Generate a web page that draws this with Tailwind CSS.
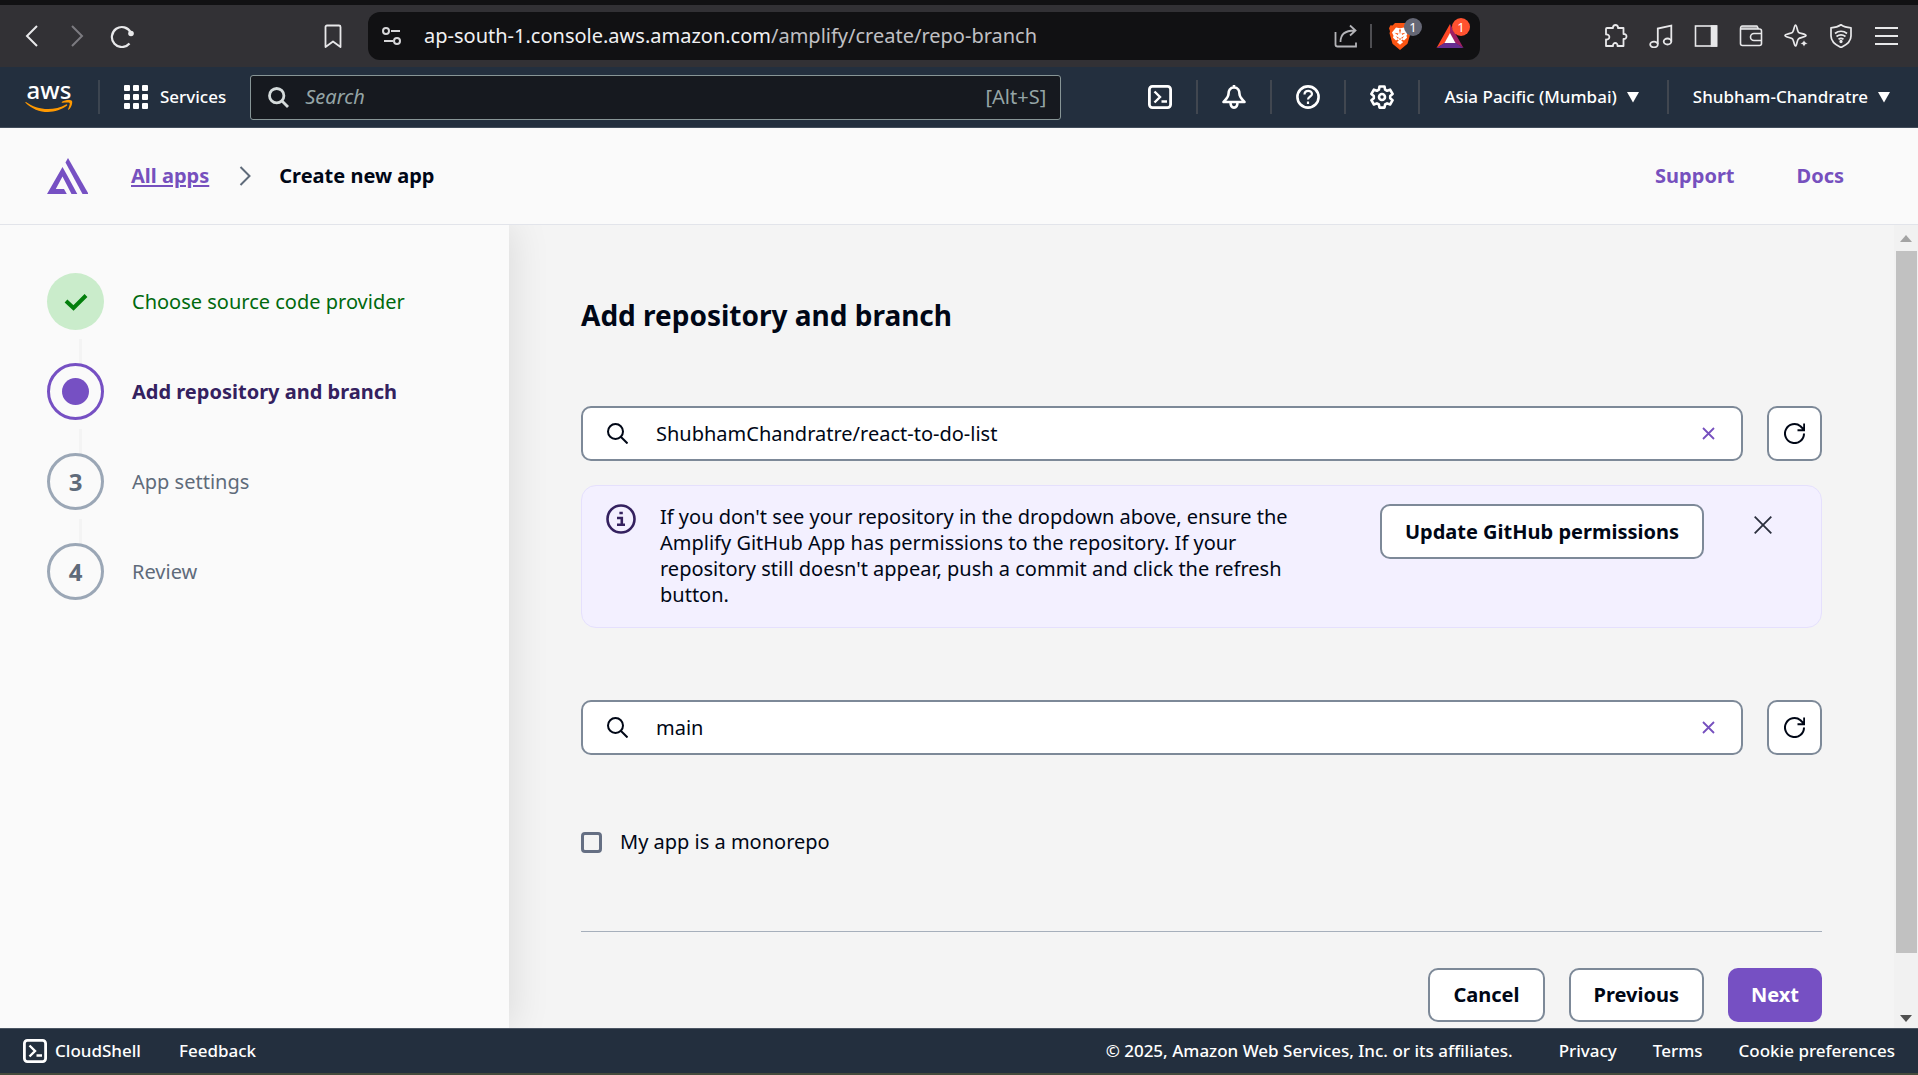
<!DOCTYPE html>
<html lang="en">
<head>
<meta charset="utf-8">
<meta name="viewport" content="width=device-width, initial-scale=1">
<title>AWS Amplify - Create new app</title>
<script src="https://cdn.jsdelivr.net/npm/@tailwindcss/browser@4"></script>
</head>
<body class="flex h-screen flex-col overflow-hidden bg-[#fafafa] font-['Noto_Sans',sans-serif] text-[20px] leading-[26px] text-[#000716]">

<!-- Browser toolbar -->
<div class="flex h-[67px] shrink-0 items-center border-t-5 border-[#111113] bg-[#323135] pr-5 text-[#e8e8ea]">
  <div class="flex w-[368px] shrink-0 items-center gap-[21px] pr-[23px] pl-5">
    <button type="button" aria-label="Back"><svg class="size-6" viewBox="0 0 24 24" fill="none" stroke="currentColor" stroke-width="2"><path d="M17 2 7 12l10 10"/></svg></button>
    <button type="button" aria-label="Forward" class="text-[#7c7b80]"><svg class="size-6" viewBox="0 0 24 24" fill="none" stroke="currentColor" stroke-width="2"><path d="m7 2 10 10L7 22"/></svg></button>
    <button type="button" aria-label="Reload"><svg class="size-6" viewBox="0 0 24 24" fill="none" stroke="currentColor" stroke-width="2.200"><path d="M19.500 19.500a10 10 0 1 1 1.300-11"/><circle cx="21" cy="9.500" r="2.800" fill="currentColor" stroke="none"/></svg></button>
    <button type="button" aria-label="Bookmark" class="ml-auto"><svg class="size-6" viewBox="0 0 24 24" fill="none" stroke="currentColor" stroke-width="1.800" stroke-linejoin="round"><path d="M4.500 3a1.500 1.500 0 0 1 1.500-1.500h12A1.500 1.500 0 0 1 19.500 3v20L12 17.500 4.500 23z"/></svg></button>
  </div>
  <div class="mr-31 flex h-12 flex-1 items-center rounded-xl bg-[#111113] pr-4 pl-3">
    <svg class="size-6 shrink-0" viewBox="0 0 24 24" fill="none" stroke="#d6d6d8" stroke-width="2"><circle cx="6" cy="7" r="3"/><path d="M11 7h9M4 17h9"/><circle cx="17" cy="17" r="3"/></svg>
    <p class="ml-5 flex-1 text-[#f0f0f2]">ap-south-1.console.aws.amazon.com<span class="text-[#c0c0c4]">/amplify/create/repo-branch</span></p>
    <button type="button" aria-label="Share"><svg class="size-6" viewBox="0 0 24 24" fill="none" stroke="#b4b4b8" stroke-width="1.800"><path d="M1.500 8v12.500a2 2 0 0 0 2 2h18.500v-4M6.500 18c0-7 4-11.500 14-11.500M16 1.500l5.500 5-5.500 5"/></svg></button>
    <span class="mr-4 ml-3 h-6 w-0.5 bg-[#4e4e52]"></span>
    <button type="button" aria-label="Brave Shields" class="relative w-7"><svg class="h-7 w-6" viewBox="0 0 24 28"><path fill="#fb5412" d="M7 1h10l2.500 2.500 2-.3 1.500 3-1 3 .5 2-3 10.500L12 28l-7.500-6.300L1.500 11.200 2 9.200l-1-3 1.500-3 2 .3z"/><path fill="#fff" d="M8 5.500 12 6.300l4-.8 4 5-1.500 3.300.5 2-3 2.700-1.500-1-1.300 1.200 2 1.300-3.200 2.800-3.200-2.800 2-1.300L9.500 17.500l-1.500 1-3-2.700.5-2L4 10.500z"/><path fill="#fb5412" d="m6.500 10.800 4 .6-.8 1.500zM17.500 10.800l-4 .6.8 1.500zM8 14l3 2-1.500.6zM16 14l-3 2 1.500.6zM11 7.500h2l-1 5zM10.500 16.500h3L12 18z"/></svg><span class="absolute -top-1 left-4 size-[18px] rounded-full bg-[#656775] text-center text-[13px] leading-[18px] text-white">1</span></button>
    <button type="button" aria-label="Brave Rewards" class="relative ml-5 w-7"><svg class="h-7 w-7" viewBox="0 0 28 28"><path fill="#ff4724" d="M14 2 .5 26 9 21l5-9z"/><path fill="#9e1f63" d="m14 2 13.500 24L19 21l-5-9z"/><path fill="#662d91" d="M.5 26h27L19 20.500H9z"/><path fill="#fff" d="m14 11 5.500 10h-11z"/></svg><span class="absolute -top-1 left-4 size-[18px] rounded-full bg-[#ff5230] text-center text-[13px] leading-[18px] text-white">1</span></button>
  </div>
  <div class="flex items-center gap-[21px]">
    <button type="button" aria-label="Extensions"><svg class="size-6" viewBox="0 0 24 24" fill="none" stroke="currentColor" stroke-width="1.800" stroke-linejoin="round"><path d="M3 4h6c-.5-4 5.500-4 5 0h5.500v6c4-.3 4 5.300 0 5v7h-6c.5-4-5-4-4.500 0H2v-6.500c4.500.5 4.500-5.500 0-5V5a1 1 0 0 1 1-1z"/></svg></button>
    <button type="button" aria-label="Playlist"><svg class="size-6" viewBox="0 0 24 24" fill="none" stroke="currentColor" stroke-width="1.800"><ellipse cx="5" cy="20.500" rx="3.800" ry="2.800"/><ellipse cx="18.500" cy="17.500" rx="3.800" ry="3"/><path d="M8.800 20V4.500L22.300 1.500v16"/></svg></button>
    <button type="button" aria-label="Sidebar"><svg class="size-6" viewBox="0 0 24 24" fill="none" stroke="currentColor" stroke-width="1.600"><rect x="1.500" y="2" width="21" height="20"/><path fill="currentColor" d="M17.500 2h5v20h-5z"/></svg></button>
    <button type="button" aria-label="Wallet"><svg class="size-6" viewBox="0 0 24 24" fill="none" stroke="currentColor" stroke-width="1.600" stroke-linejoin="round"><path d="M1.500 5v14.500a2 2 0 0 0 2 2h17a2 2 0 0 0 2-2V7a2 2 0 0 0-2-2zM1.500 5c0-2 .5-3 2-3h14.500l1.500 3M22.500 9.500H15a3.500 3.500 0 0 0 0 7h7.500"/><path fill="currentColor" fill-opacity=".6" stroke="none" d="M3 2h15l1 3H2z"/></svg></button>
    <button type="button" aria-label="Leo AI"><svg class="size-6" viewBox="0 0 24 24" fill="none" stroke="currentColor" stroke-width="1.700" stroke-linejoin="round"><path d="M11.500 1c1.300 0 1.700 6 3 7.300S22 10 22 11.500s-6 2-7.500 3.300-1.700 7.200-3 7.200-1.700-6-3-7.200S1 13 1 11.500s6-2 7.500-3.200S10.200 1 11.500 1z"/><path stroke="#323135" stroke-width="1" fill="currentColor" d="m20 15 1.300 3 3 1.500-3 1.300L20 24l-1.300-3.200-3-1.300 3-1.500z"/></svg></button>
    <button type="button" aria-label="VPN"><svg class="size-6" viewBox="0 0 24 24" fill="none" stroke="currentColor" stroke-width="1.700" stroke-linejoin="round"><path d="M12 .8c3 2.200 6 2.800 10 3V12c0 5-4.500 9-10 11.500C6.500 21 2 17 2 12V3.800c4-.2 7-.8 10-3z"/><path d="M6 9.500c3.500-3 8.500-3 12 0M7.500 12.500c2.700-2 6.300-2 9 0M9.500 15.300c1.500-1 3.500-1 5 0"/><circle cx="12" cy="17.500" r=".8" fill="currentColor"/></svg></button>
    <button type="button" aria-label="Menu"><svg class="size-6" viewBox="0 0 24 24" fill="none" stroke="currentColor" stroke-width="2"><path d="M1 4h23M1 12h23M1 20h23"/></svg></button>
  </div>
</div>

<!-- AWS global navigation -->
<nav class="flex h-[61px] shrink-0 items-center border-b border-[#424d5b] bg-[#232f3e] pr-7 pl-[25px] text-[17px] font-medium text-white">
  <a href="#" aria-label="AWS home" class="shrink-0"><svg class="h-11 w-12" viewBox="0 0 48 44"><text x="24" y="24" text-anchor="middle" font-family="Noto Sans, sans-serif" font-size="24" font-weight="500" fill="#fff">aws</text><g transform="translate(0 6)"><path fill="#ff9900" d="M1 21c6 4.500 14 7 22 7 6 0 13-1.500 18-4.500 1-.6 1.800.6.900 1.300C37 28.500 29.500 31 23 31 14.500 31 6.500 27.500.7 21.900.2 21.400.4 20.700 1 21z"/><path fill="#ff9900" d="M37 20.700c3-2 9-2.200 10-.8.700 1.500-.2 6.300-3.200 8.700-.5.400-1 .2-.7-.3.700-1.700 2.100-5.300 1.500-6.200-.6-.9-4.500-.5-6.900-.3-.9.100-1.500-.5-.7-1.100z"/></g></svg></a>
  <span class="mr-6 ml-[25px] h-[34px] w-0.5 bg-[#3c4550]"></span>
  <button type="button" class="flex items-center gap-3 pr-6"><svg class="size-6" viewBox="0 0 24 24" fill="currentColor"><rect width="6" height="6" rx="1"/><rect x="9" width="6" height="6" rx="1"/><rect x="18" width="6" height="6" rx="1"/><rect y="9" width="6" height="6" rx="1"/><rect x="9" y="9" width="6" height="6" rx="1"/><rect x="18" y="9" width="6" height="6" rx="1"/><rect y="18" width="6" height="6" rx="1"/><rect x="9" y="18" width="6" height="6" rx="1"/><rect x="18" y="18" width="6" height="6" rx="1"/></svg>Services</button>
  <label class="flex h-[45px] w-[811px] items-center rounded-[3px] border border-[#879596] bg-[#16191f] pr-3.5 pl-[17px] text-[20px] font-normal text-[#95a5a6]">
    <svg class="size-[21px] shrink-0" viewBox="0 0 21 21" fill="none" stroke="#d5dbdb" stroke-width="2.800"><circle cx="8.700" cy="8.700" r="7.200"/><path d="m14 14 6 6"/></svg>
    <input type="search" placeholder="Search" aria-label="Search" class="ml-4 min-w-0 flex-1 bg-transparent italic outline-none placeholder:text-[#95a5a6]">
    <span>[Alt+S]</span>
  </label>
  <div class="ml-auto flex items-center">
    <button type="button" aria-label="CloudShell" class="px-6"><svg class="size-6" viewBox="0 0 24 24" fill="none" stroke="currentColor" stroke-width="2.800"><rect x="1.400" y="1.400" width="21.200" height="21.200" rx="3"/><path stroke-width="2.400" d="m6.500 6.500 5.500 5.500-5.500 5.500M13.500 16.500H19"/></svg></button>
    <span class="h-[34px] w-0.5 bg-[#414750]"></span>
    <button type="button" aria-label="Notifications" class="px-6"><svg class="size-6" viewBox="0 0 24 24" fill="none" stroke="currentColor" stroke-width="2.600" stroke-linejoin="round"><path d="M12 0v3M12 2.500c-4 0-5.500 3-5.500 6.500C6.500 12.500 3 15 1.500 17h21c-1.500-2-5-4.500-5-8 0-3.500-1.500-6.500-5.500-6.500zM8.500 17c0 7.500 7 7.500 7 0"/></svg></button>
    <span class="h-[34px] w-0.5 bg-[#414750]"></span>
    <button type="button" aria-label="Help" class="px-6"><svg class="size-6" viewBox="0 0 24 24" fill="none" stroke="currentColor" stroke-width="2.600"><circle cx="12" cy="12" r="10.600"/><path stroke-width="2.200" d="M8.500 9.500c0-5 7.500-4.500 7.500-.5 0 2.500-4 2.500-4 5.500M12 16.500V19"/></svg></button>
    <span class="h-[34px] w-0.5 bg-[#414750]"></span>
    <button type="button" aria-label="Settings" class="px-6"><svg class="size-6" viewBox="0 0 24 24" fill="none" stroke="currentColor" stroke-width="2.600" stroke-linejoin="round"><path d="M9.500 1.500h5l.6 3.200 2 1.100 3-1.100 2.500 4.300-2.400 2v2.200l2.400 2-2.500 4.300-3-1.100-2 1.100-.6 3.100h-5l-.6-3.100-2-1.100-3 1.100L1.400 15.200l2.400-2V11l-2.400-2 2.500-4.300 3 1.100 2-1.100z"/><circle cx="12" cy="12" r="3"/></svg></button>
    <span class="h-[34px] w-0.5 bg-[#414750]"></span>
    <button type="button" class="flex items-center gap-2.5 pr-7 pl-6">Asia Pacific (Mumbai)<svg class="size-3" viewBox="0 0 12 12" fill="currentColor"><path d="M0 1h12L6 11.500z"/></svg></button>
    <span class="h-[34px] w-0.5 bg-[#414750]"></span>
    <button type="button" class="flex items-center gap-2.5 pl-6">Shubham-Chandratre<svg class="size-3" viewBox="0 0 12 12" fill="currentColor"><path d="M0 1h12L6 11.500z"/></svg></button>
  </div>
</nav>

<!-- Amplify header -->
<header class="flex h-[97px] shrink-0 items-center border-b border-[#e2e4ea] pr-[74px] pl-[47px] font-bold">
  <svg class="h-9 w-[41px]" viewBox="0 0 41 36" fill="#7650c3"><path d="M0 36 15.500 9l4.500 8 10.300 19h-5.800L15.500 18.500 8.800 31H17l2.800 5z"/><path d="M18.500 4.500 21 0l20.500 36h-6z"/></svg>
  <a href="#" class="ml-[43px] text-[#7650be] underline underline-offset-2">All apps</a>
  <svg class="mr-7 ml-[30px] h-5 w-3" viewBox="0 0 12 20" fill="none" stroke="#5f6b7a" stroke-width="2"><path d="m1.500 1 9 9-9 9"/></svg>
  <span>Create new app</span>
  <a href="#" class="ml-auto text-[#7650be]">Support</a>
  <a href="#" class="ml-[62px] text-[#7650be]">Docs</a>
</header>

<div class="flex min-h-0 flex-1 overflow-hidden">
  <!-- Wizard steps -->
  <aside class="relative z-10 w-[509px] shrink-0 bg-[#fafafa] pt-12 pl-[47px] shadow-[4px_0_36px_rgba(0,0,0,0.1)]">
    <ol>
      <li class="flex items-center gap-7 text-[#00690d]"><span class="flex size-[57px] items-center justify-center rounded-full bg-[#caeccb]"><svg class="size-6" viewBox="0 0 24 24" fill="none" stroke="#037f0c" stroke-width="4"><path d="m2 11 7.500 7L22 5.500"/></svg></span>Choose source code provider</li>
      <li aria-hidden="true" class="mt-[9px] ml-8 h-6 w-[3px] bg-[#f4f4f4]"></li>
      <li class="flex items-center gap-7 font-bold text-[#34215f]"><span class="flex size-[57px] items-center justify-center rounded-full border-3 border-[#7650c3]"><span class="size-[27px] rounded-full bg-[#7650c3]"></span></span>Add repository and branch</li>
      <li aria-hidden="true" class="mt-[9px] ml-8 h-6 w-[3px] bg-[#f4f4f4]"></li>
      <li class="flex items-center gap-7 text-[#5f6b7a]"><span class="flex size-[57px] items-center justify-center rounded-full border-3 border-[#9ba7b6] text-[24px] font-bold">3</span>App settings</li>
      <li aria-hidden="true" class="mt-[9px] ml-8 h-6 w-[3px] bg-[#f4f4f4]"></li>
      <li class="flex items-center gap-7 text-[#5f6b7a]"><span class="flex size-[57px] items-center justify-center rounded-full border-3 border-[#9ba7b6] text-[24px] font-bold">4</span>Review</li>
    </ol>
  </aside>

  <main class="min-w-0 flex-1 bg-[#f4f4f4] px-18 pt-18">
    <h1 class="text-[28px] leading-[37px] font-bold">Add repository and branch</h1>

    <div class="mt-18 flex gap-6">
      <div class="flex h-[55px] flex-1 items-center rounded-[10px] border-2 border-[#7d8998] bg-white pr-[26px] pl-6">
        <svg class="size-[21px] shrink-0" viewBox="0 0 21 21" fill="none" stroke="currentColor" stroke-width="2"><circle cx="8.500" cy="8.500" r="7.500"/><path d="m14 14 6.500 6.500"/></svg>
        <input type="text" aria-label="Repository" value="ShubhamChandratre/react-to-do-list" class="ml-7 min-w-0 flex-1 outline-none">
        <button type="button" aria-label="Clear repository"><svg class="size-[13px]" viewBox="0 0 13 13" fill="none" stroke="#7650be" stroke-width="1.800"><path d="m1 1 11 11M12 1 1 12"/></svg></button>
      </div>
      <button type="button" aria-label="Refresh repositories" class="flex size-[55px] items-center justify-center rounded-[10px] border-2 border-[#7d8998] bg-white"><svg class="size-[21px]" viewBox="0 0 21 21" fill="none" stroke="currentColor" stroke-width="2"><path d="M20 10.500a9.500 9.500 0 1 1-3.500-7.300L20 6.800M20.200.500v6.800h-6.700"/></svg></button>
    </div>

    <section class="mt-6 flex items-start rounded-[15px] border border-[#e5e0fd] bg-[#f3f0ff] pt-[18px] pr-[49px] pb-[19px] pl-6">
      <svg class="size-[30px] shrink-0" viewBox="0 0 30 30" fill="none" stroke="#34215f" stroke-width="2.600"><circle cx="15" cy="15" r="13.500"/><path d="M13.400 9h3.400M11 14h4.800v6.500M11 20.700h8"/></svg>
      <p class="ml-6 flex-1 pr-12">If you don't see your repository in the dropdown above, ensure the Amplify GitHub App has permissions to the repository. If your repository still doesn't appear, push a commit and click the refresh button.</p>
      <button type="button" class="h-[55px] shrink-0 rounded-[10px] border-2 border-[#7d8998] bg-white px-[23px] font-bold">Update GitHub permissions</button>
      <button type="button" aria-label="Dismiss" class="mt-3 ml-[50px]"><svg class="size-[18px]" viewBox="0 0 18 18" fill="none" stroke="#2a2f3d" stroke-width="1.800"><path d="m.7.700 16.600 16.600M17.300.700.7 17.300"/></svg></button>
    </section>

    <div class="mt-18 flex gap-6">
      <div class="flex h-[55px] flex-1 items-center rounded-[10px] border-2 border-[#7d8998] bg-white pr-[26px] pl-6">
        <svg class="size-[21px] shrink-0" viewBox="0 0 21 21" fill="none" stroke="currentColor" stroke-width="2"><circle cx="8.500" cy="8.500" r="7.500"/><path d="m14 14 6.500 6.500"/></svg>
        <input type="text" aria-label="Branch" value="main" class="ml-7 min-w-0 flex-1 outline-none">
        <button type="button" aria-label="Clear branch"><svg class="size-[13px]" viewBox="0 0 13 13" fill="none" stroke="#7650be" stroke-width="1.800"><path d="m1 1 11 11M12 1 1 12"/></svg></button>
      </div>
      <button type="button" aria-label="Refresh branches" class="flex size-[55px] items-center justify-center rounded-[10px] border-2 border-[#7d8998] bg-white"><svg class="size-[21px]" viewBox="0 0 21 21" fill="none" stroke="currentColor" stroke-width="2"><path d="M20 10.500a9.500 9.500 0 1 1-3.500-7.300L20 6.800M20.200.500v6.800h-6.700"/></svg></button>
    </div>

    <label class="mt-18 flex w-fit items-center gap-[18px] leading-[30px]"><input type="checkbox" class="size-[21px] appearance-none rounded-[4px] border-3 border-[#656f83]">My app is a monorepo</label>

    <div class="mt-[74px] flex justify-end gap-6 border-t border-[#a6afbb] pt-9 font-bold">
      <button type="button" class="h-[54px] rounded-[10px] border-2 border-[#7d8998] bg-white px-[23px]">Cancel</button>
      <button type="button" class="h-[54px] rounded-[10px] border-2 border-[#7d8998] bg-white px-[23px]">Previous</button>
      <button type="button" class="h-[54px] rounded-[10px] bg-[#7650c3] px-[23px] text-white">Next</button>
    </div>
  </main>

  <!-- Scrollbar -->
  <div aria-hidden="true" class="flex w-6 shrink-0 flex-col items-center bg-[#f1f1f1]">
    <svg class="my-2 h-2.5 w-3" viewBox="0 0 12 10" fill="#a3a3a3"><path d="M0 9h12L6 2z"/></svg>
    <div class="w-[21px] flex-1 bg-[#c1c1c1]"></div>
    <svg class="mt-[61px] mb-1 h-2.5 w-3" viewBox="0 0 12 10" fill="#505050"><path d="M0 1h12L6 8z"/></svg>
  </div>
</div>

<!-- Console footer -->
<footer class="flex h-[47px] shrink-0 items-center border-t border-b-2 border-t-[#4b5563] border-b-[#444b3c] bg-[#232f3e] px-[23px] text-[17px] font-medium text-white">
  <button type="button" class="flex items-center gap-2"><svg class="size-6" viewBox="0 0 24 24" fill="none" stroke="currentColor" stroke-width="2.800"><rect x="1.400" y="1.400" width="21.200" height="21.200" rx="3"/><path stroke-width="2.400" d="m6.500 6.500 5.500 5.500-5.500 5.500M13.500 16.500H19"/></svg>CloudShell</button>
  <a href="#" class="ml-[38px]">Feedback</a>
  <span class="ml-auto">© 2025, Amazon Web Services, Inc. or its affiliates.</span>
  <a href="#" class="ml-[46px]">Privacy</a>
  <a href="#" class="ml-9">Terms</a>
  <a href="#" class="ml-9">Cookie preferences</a>
</footer>
</body>
</html>
